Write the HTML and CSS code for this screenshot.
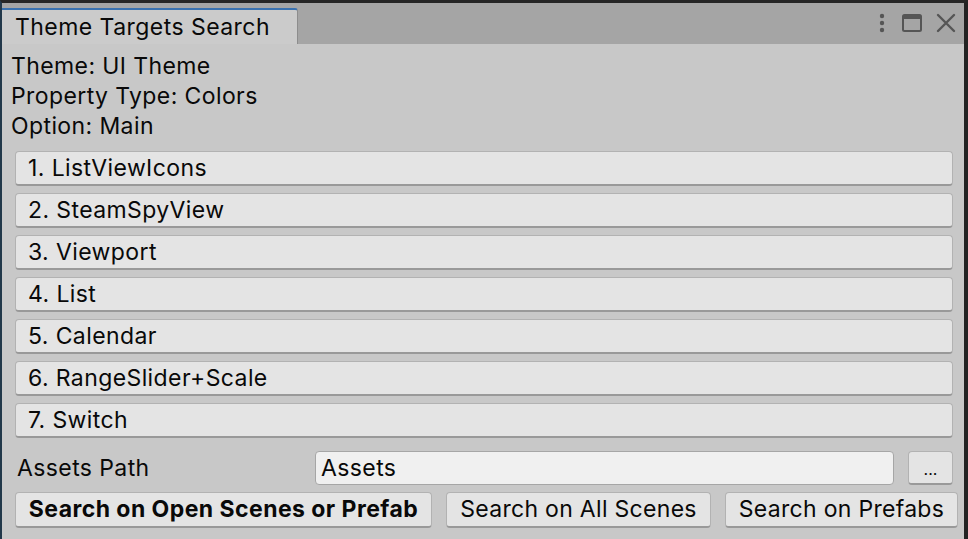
FILE: index.html
```html
<!DOCTYPE html>
<html>
<head>
<meta charset="utf-8">
<link rel="stylesheet" href="styles.css">
</head>
<body>
<div class="window">
  <div class="tabbar">
    <div class="tab">Theme Targets Search</div>
    <div class="tab-rest">
      <svg class="icon" width="12" height="20" viewBox="0 0 12 20"><circle cx="6" cy="3" r="2.2" fill="#555"/><circle cx="6" cy="10" r="2.2" fill="#555"/><circle cx="6" cy="17" r="2.2" fill="#555"/></svg>
      <svg class="icon" width="22" height="20" viewBox="0 0 22 20"><rect x="2" y="2" width="18" height="16" rx="1.5" fill="none" stroke="#555" stroke-width="2"/><rect x="2" y="2" width="18" height="4" fill="#555"/></svg>
      <svg class="icon" width="20" height="20" viewBox="0 0 20 20"><path d="M2 2 L18 18 M18 2 L2 18" stroke="#555" stroke-width="2.4" stroke-linecap="round"/></svg>
    </div>
  </div>
  <div class="content">
    <div class="info">Theme: UI Theme</div>
    <div class="info">Property Type: Colors</div>
    <div class="info">Option: Main</div>
    <div class="list">
      <div class="btn item">1. ListViewIcons</div>
      <div class="btn item">2. SteamSpyView</div>
      <div class="btn item">3. Viewport</div>
      <div class="btn item">4. List</div>
      <div class="btn item">5. Calendar</div>
      <div class="btn item">6. RangeSlider+Scale</div>
      <div class="btn item">7. Switch</div>
    </div>
    <div class="path-row">
      <div class="path-label">Assets Path</div>
      <div class="field">Assets</div>
      <div class="btn dots">...</div>
    </div>
    <div class="actions">
      <div class="btn action bold w1">Search on Open Scenes or Prefab</div>
      <div class="btn action w2">Search on All Scenes</div>
      <div class="btn action w3">Search on Prefabs</div>
    </div>
  </div>
</div>
</body>
</html>
```
FILE: styles.css
```css
* { box-sizing: border-box; }
html, body { margin: 0; padding: 0; }
body {
  background: #232323;
  font-family: Inter, "Noto Sans", sans-serif;
  font-size: 23px;
  letter-spacing: 0.4px;
  color: #090909;
  width: 968px;
  height: 539px;
  overflow: hidden;
}
.window {
  height: 539px;
  border-top: 3px solid #262626;
  border-left: 2px solid #22384a;
  border-right: 4px solid #232323;
  display: flex;
  flex-direction: column;
  background: #c8c8c8;
}
.tabbar {
  height: 41px;
  background: #a5a5a5;
  display: flex;
  align-items: flex-end;
}
.tab {
  width: 296px;
  height: 36px;
  background: #cbcbcb;
  border-top: 2px solid #3a72b0;
  border-right: 1px solid #8d8d8d;
  border-top-right-radius: 3px;
  padding-left: 13px;
  line-height: 35px;
  white-space: nowrap;
  letter-spacing: 0.45px;
}
.tab-rest {
  flex: 1;
  align-self: stretch;
  display: flex;
  justify-content: flex-end;
  align-items: center;
  gap: 13px;
  padding-right: 8px;
  padding-bottom: 2px;
}
.icon { display: block; }
.content {
  flex: 1;
  padding: 7px 11px 0 9px;
}
.info {
  line-height: 30px;
  height: 30px;
  white-space: nowrap;
}
.list {
  margin-top: 10px;
  display: flex;
  flex-direction: column;
  gap: 7px;
  padding-left: 4px;
}
.btn {
  background: #e4e4e4;
  border: 1px solid #b2b2b2;
  border-bottom: 2px solid #999;
  border-radius: 4px;
  white-space: nowrap;
}
.item {
  height: 35px;
  line-height: 32px;
  padding-left: 12px;
}
.path-row {
  display: flex;
  align-items: center;
  height: 34px;
  margin-top: 13px;
}
.path-label {
  width: 304px;
  padding-left: 6px;
}
.field {
  width: 579px;
  height: 34px;
  background: #f0f0f0;
  border: 1px solid #a6a6a6;
  border-radius: 4px;
  line-height: 32px;
  padding-left: 5px;
}
.dots {
  margin-left: 14px;
  width: 45px;
  height: 34px;
  line-height: 34px;
  text-align: center;
  font-size: 16px;
  letter-spacing: 0;
}
.actions {
  display: flex;
  gap: 14px;
  margin-top: 7px;
  padding-left: 4px;
}
.action {
  height: 36px;
  line-height: 33px;
  text-align: center;
  flex: none;
}
.w1 { width: 417px; letter-spacing: 0.45px; }
.w2 { width: 265px; letter-spacing: 0.3px; }
.w3 { width: 233px; letter-spacing: 0.3px; }
.bold { font-weight: bold; }
```
